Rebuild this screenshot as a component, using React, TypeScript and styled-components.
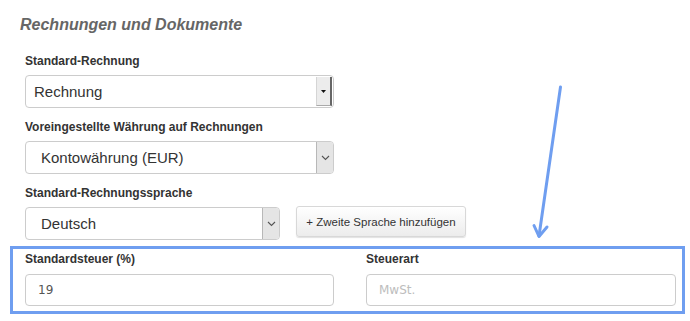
import React, { FC } from "react";
import styled, { createGlobalStyle } from "styled-components";

const GlobalStyle = createGlobalStyle`
  html, body {
    margin: 0;
    padding: 0;
    background: #ffffff;
  }
  body {
    font-family: "Liberation Sans", Arial, sans-serif;
  }
`;

const ACCENT = "#6f9ef0";

const Page = styled.div`
  position: relative;
  width: 690px;
  height: 321px;
  box-sizing: border-box;
  padding: 15px 0 0 10px;
  overflow: hidden;
`;

const Title = styled.h2`
  margin: 0 0 19px 10px;
  font-size: 16px;
  line-height: 20px;
  font-weight: bold;
  font-style: italic;
  color: #666;
`;

const Fields = styled.div`
  display: flex;
  flex-direction: column;
  gap: 12px;
  padding-left: 15px;
`;

const Field = styled.div`
  display: flex;
  flex-direction: column;
  gap: 6px;
`;

const Label = styled.label`
  font-size: 12px;
  line-height: 15px;
  font-weight: bold;
  color: #333;
`;

const Row = styled.div`
  display: flex;
  align-items: flex-start;
  gap: 16px;
`;

const SelectBox = styled.div<{ $width: number }>`
  display: flex;
  width: ${(p) => p.$width}px;
  height: 33px;
  box-sizing: border-box;
  border: 1px solid #ccc;
  border-radius: 4px;
  background: #fff;
  overflow: hidden;
`;

const SelectText = styled.span<{ $indent: number }>`
  flex: 1;
  display: flex;
  align-items: center;
  padding-left: ${(p) => p.$indent}px;
  font-size: 15px;
  color: #333;
`;

const NativeButton = styled.span`
  width: 13px;
  margin: 1px 1px 1px 0;
  display: flex;
  align-items: center;
  justify-content: center;
  background: #ececec;
  border-left: 1px solid #d5d5d5;
  border-right: 2px solid #666;
  border-bottom: 1px solid #aaa;
`;

const ChevronButton = styled.span`
  width: 16px;
  display: flex;
  align-items: center;
  justify-content: center;
  background: #e5e5e5;
  border-left: 1px solid #b8b8b8;
`;

const AddButton = styled.button`
  margin-top: -1px;
  width: 170px;
  height: 31px;
  box-sizing: border-box;
  border: 1px solid #d8d8d8;
  border-radius: 3px;
  background: linear-gradient(#ffffff, #ececec);
  box-shadow: 0 1px 1px rgba(0, 0, 0, 0.12);
  font-family: "Liberation Sans", Tahoma, sans-serif;
  font-size: 11.5px;
  color: #333;
  padding: 0;
`;

const Highlight = styled.div`
  margin: 6px 5px 0 0;
  border: 3px solid ${ACCENT};
  padding: 3px 6px 5px 12px;
  display: flex;
  gap: 32px;
`;

const TaxField = styled(Field)`
  gap: 7px;
`;

const Input = styled.div<{ $width: number; $placeholder?: boolean }>`
  width: ${(p) => p.$width}px;
  height: 32px;
  box-sizing: border-box;
  border: 1px solid #ccc;
  border-radius: 4px;
  display: flex;
  align-items: center;
  padding-left: 12px;
  font-family: "DejaVu Sans", Tahoma, sans-serif;
  font-size: 12px;
  color: ${(p) => (p.$placeholder ? "#bdbdbd" : "#555")};
`;

const Overlay = styled.svg`
  position: absolute;
  left: 0;
  top: 0;
  pointer-events: none;
`;

const Select: FC<{ value: string; width: number; indent: number; native?: boolean }> = ({
  value,
  width,
  indent,
  native,
}) => (
  <SelectBox $width={width}>
    <SelectText $indent={indent}>{value}</SelectText>
    {native ? (
      <NativeButton>
        <svg width="5" height="3" viewBox="0 0 5 3">
          <path d="M0 0h5L2.5 3z" fill="#111" />
        </svg>
      </NativeButton>
    ) : (
      <ChevronButton>
        <svg width="9" height="6" viewBox="0 0 9 6">
          <path d="M1 1l3.5 3.5L8 1" fill="none" stroke="#555" strokeWidth="1.1" />
        </svg>
      </ChevronButton>
    )}
  </SelectBox>
);

export default function App() {
  return (
    <>
      <GlobalStyle />
      <Page>
        <Title>Rechnungen und Dokumente</Title>
        <Fields>
          <Field>
            <Label>Standard-Rechnung</Label>
            <Select value="Rechnung" width={309} indent={8} native />
          </Field>
          <Field>
            <Label>Voreingestellte Währung auf Rechnungen</Label>
            <Select value="Kontowährung (EUR)" width={309} indent={15} />
          </Field>
          <Field>
            <Label>Standard-Rechnungssprache</Label>
            <Row>
              <Select value="Deutsch" width={255} indent={15} />
              <AddButton>+ Zweite Sprache hinzufügen</AddButton>
            </Row>
          </Field>
        </Fields>
        <Highlight>
          <TaxField>
            <Label>Standardsteuer (%)</Label>
            <Input $width={309}>19</Input>
          </TaxField>
          <TaxField>
            <Label>Steuerart</Label>
            <Input $width={310} $placeholder>
              MwSt.
            </Input>
          </TaxField>
        </Highlight>
        <Overlay width="690" height="321" viewBox="0 0 690 321">
          <g stroke={ACCENT} strokeWidth="3" strokeLinecap="round" fill="none">
            <path d="M560.5 87L539 236" />
            <path d="M534 225.5L539 236.5L547 227" strokeLinejoin="round" />
          </g>
        </Overlay>
      </Page>
    </>
  );
}
